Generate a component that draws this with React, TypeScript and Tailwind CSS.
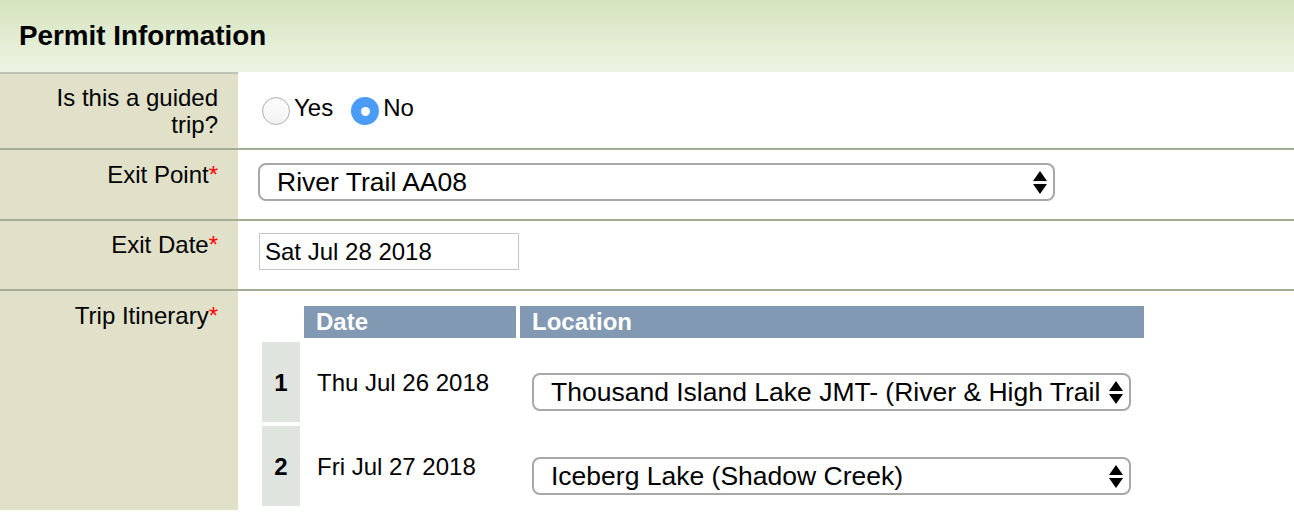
import React from "react";

const Arrows = () => (
  <svg width="14" height="23" viewBox="0 0 14 23" className="shrink-0">
    <polygon points="7,0 14,10 0,10" fill="#000" />
    <polygon points="0,13 14,13 7,23" fill="#000" />
  </svg>
);

const FakeSelect = ({ text, className }: { text: string; className: string }) => (
  <div
    className={`flex items-center h-[38px] rounded-[8px] border-2 border-[#a8a8a8] bg-white pl-[17px] pr-[6px] ${className}`}
  >
    <div className="flex-1 mr-[3px] overflow-hidden whitespace-nowrap text-[26.5px] leading-[30px] text-black">
      {text}
    </div>
    <Arrows />
  </div>
);

const Req = () => <span className="text-[#ff0000]">*</span>;

export default function App() {
  return (
    <div
      className="w-[1294px] h-[514px] overflow-hidden bg-white text-black"
      style={{ fontFamily: '"Liberation Sans", Arial, sans-serif' }}
    >
      {/* Header */}
      <div className="h-[72px] flex items-center pl-[19px] bg-gradient-to-b from-[#d5e4be] to-[#eef4e4]">
        <h1 className="text-[27.8px] font-bold leading-none">Permit Information</h1>
      </div>

      {/* Row 1 */}
      <div className="flex border-b-2 border-[#a3ae94]">
        <div className="w-[238px] shrink-0 bg-[#e1e1ca] border-t-2 border-[#bcc4b6] text-right pr-5 pt-[10px] pb-[10px] text-[24px] leading-[27px]">
          Is this a guided
          <br />
          trip?
        </div>
        <div className="flex-1 flex items-start pl-[24px] pt-[25px] pb-[23px] text-[24px] leading-[28px]">
          <label className="flex items-center">
            <span className="w-[28px] h-[28px] rounded-full border border-[#b3b3b3] bg-gradient-to-b from-white to-[#f1f1f1] shadow-[inset_0_1px_1px_rgba(0,0,0,0.08)]" />
            <span className="ml-[4px] -mt-[6px]">Yes</span>
          </label>
          <label className="flex items-center ml-[18px]">
            <span className="w-[28px] h-[28px] rounded-full bg-[#4a9cf6] flex items-center justify-center">
              <span className="w-[9px] h-[9px] rounded-full bg-white" />
            </span>
            <span className="ml-[4px] -mt-[6px]">No</span>
          </label>
        </div>
      </div>

      {/* Row 2 */}
      <div className="flex border-b-2 border-[#a3ae94]">
        <div className="w-[238px] shrink-0 bg-[#e1e1ca] text-right pr-5 pt-[11px] text-[24px] leading-[27px]">
          Exit Point
          <Req />
        </div>
        <div className="flex-1 pl-5 pt-[13px] pb-[18px]">
          <FakeSelect text="River Trail AA08" className="w-[797px]" />
        </div>
      </div>

      {/* Row 3 */}
      <div className="flex border-b-2 border-[#a3ae94]">
        <div className="w-[238px] shrink-0 bg-[#e1e1ca] text-right pr-5 pt-[10px] text-[24px] leading-[27px]">
          Exit Date
          <Req />
        </div>
        <div className="flex-1 pl-[21px] pt-[12px] pb-[19px]">
          <div className="w-[260px] h-[37px] border border-[#c6c6c6] bg-white flex items-center pl-[5px] text-[24px] leading-[28px]">
            Sat Jul 28 2018
          </div>
        </div>
      </div>

      {/* Row 4 */}
      <div className="flex">
        <div className="w-[238px] shrink-0 bg-[#e1e1ca] text-right pr-5 pt-[11px] pb-[40px] text-[24px] leading-[27px]">
          Trip Itinerary
          <Req />
        </div>
        <div className="flex-1 pl-5 pt-[11px]">
          <div className="grid grid-cols-[38px_212px_624px] gap-1 p-1 w-fit">
            <div />
            <div className="h-[32px] bg-[#8199b2] text-white font-bold text-[24px] leading-[28px] flex items-center pl-3">
              Date
            </div>
            <div className="h-[32px] bg-[#8199b2] text-white font-bold text-[24px] leading-[28px] flex items-center pl-3">
              Location
            </div>

            <div className="h-[80px] bg-[#dfe4de] flex items-center justify-center font-bold text-[24px] leading-[28px] pt-[2px]">
              1
            </div>
            <div className="h-[80px] flex items-center pl-[13px] text-[24px] leading-[28px] pt-[2px]">
              Thu Jul 26 2018
            </div>
            <div className="h-[80px] flex items-center pl-3 pt-[20px]">
              <FakeSelect
                text="Thousand Island Lake JMT- (River & High Trail"
                className="w-[599px]"
              />
            </div>

            <div className="h-[80px] bg-[#dfe4de] flex items-center justify-center font-bold text-[24px] leading-[28px] pt-[2px]">
              2
            </div>
            <div className="h-[80px] flex items-center pl-[13px] text-[24px] leading-[28px] pt-[2px]">
              Fri Jul 27 2018
            </div>
            <div className="h-[80px] flex items-center pl-3 pt-[20px]">
              <FakeSelect text="Iceberg Lake (Shadow Creek)" className="w-[599px]" />
            </div>
          </div>
        </div>
      </div>
    </div>
  );
}
